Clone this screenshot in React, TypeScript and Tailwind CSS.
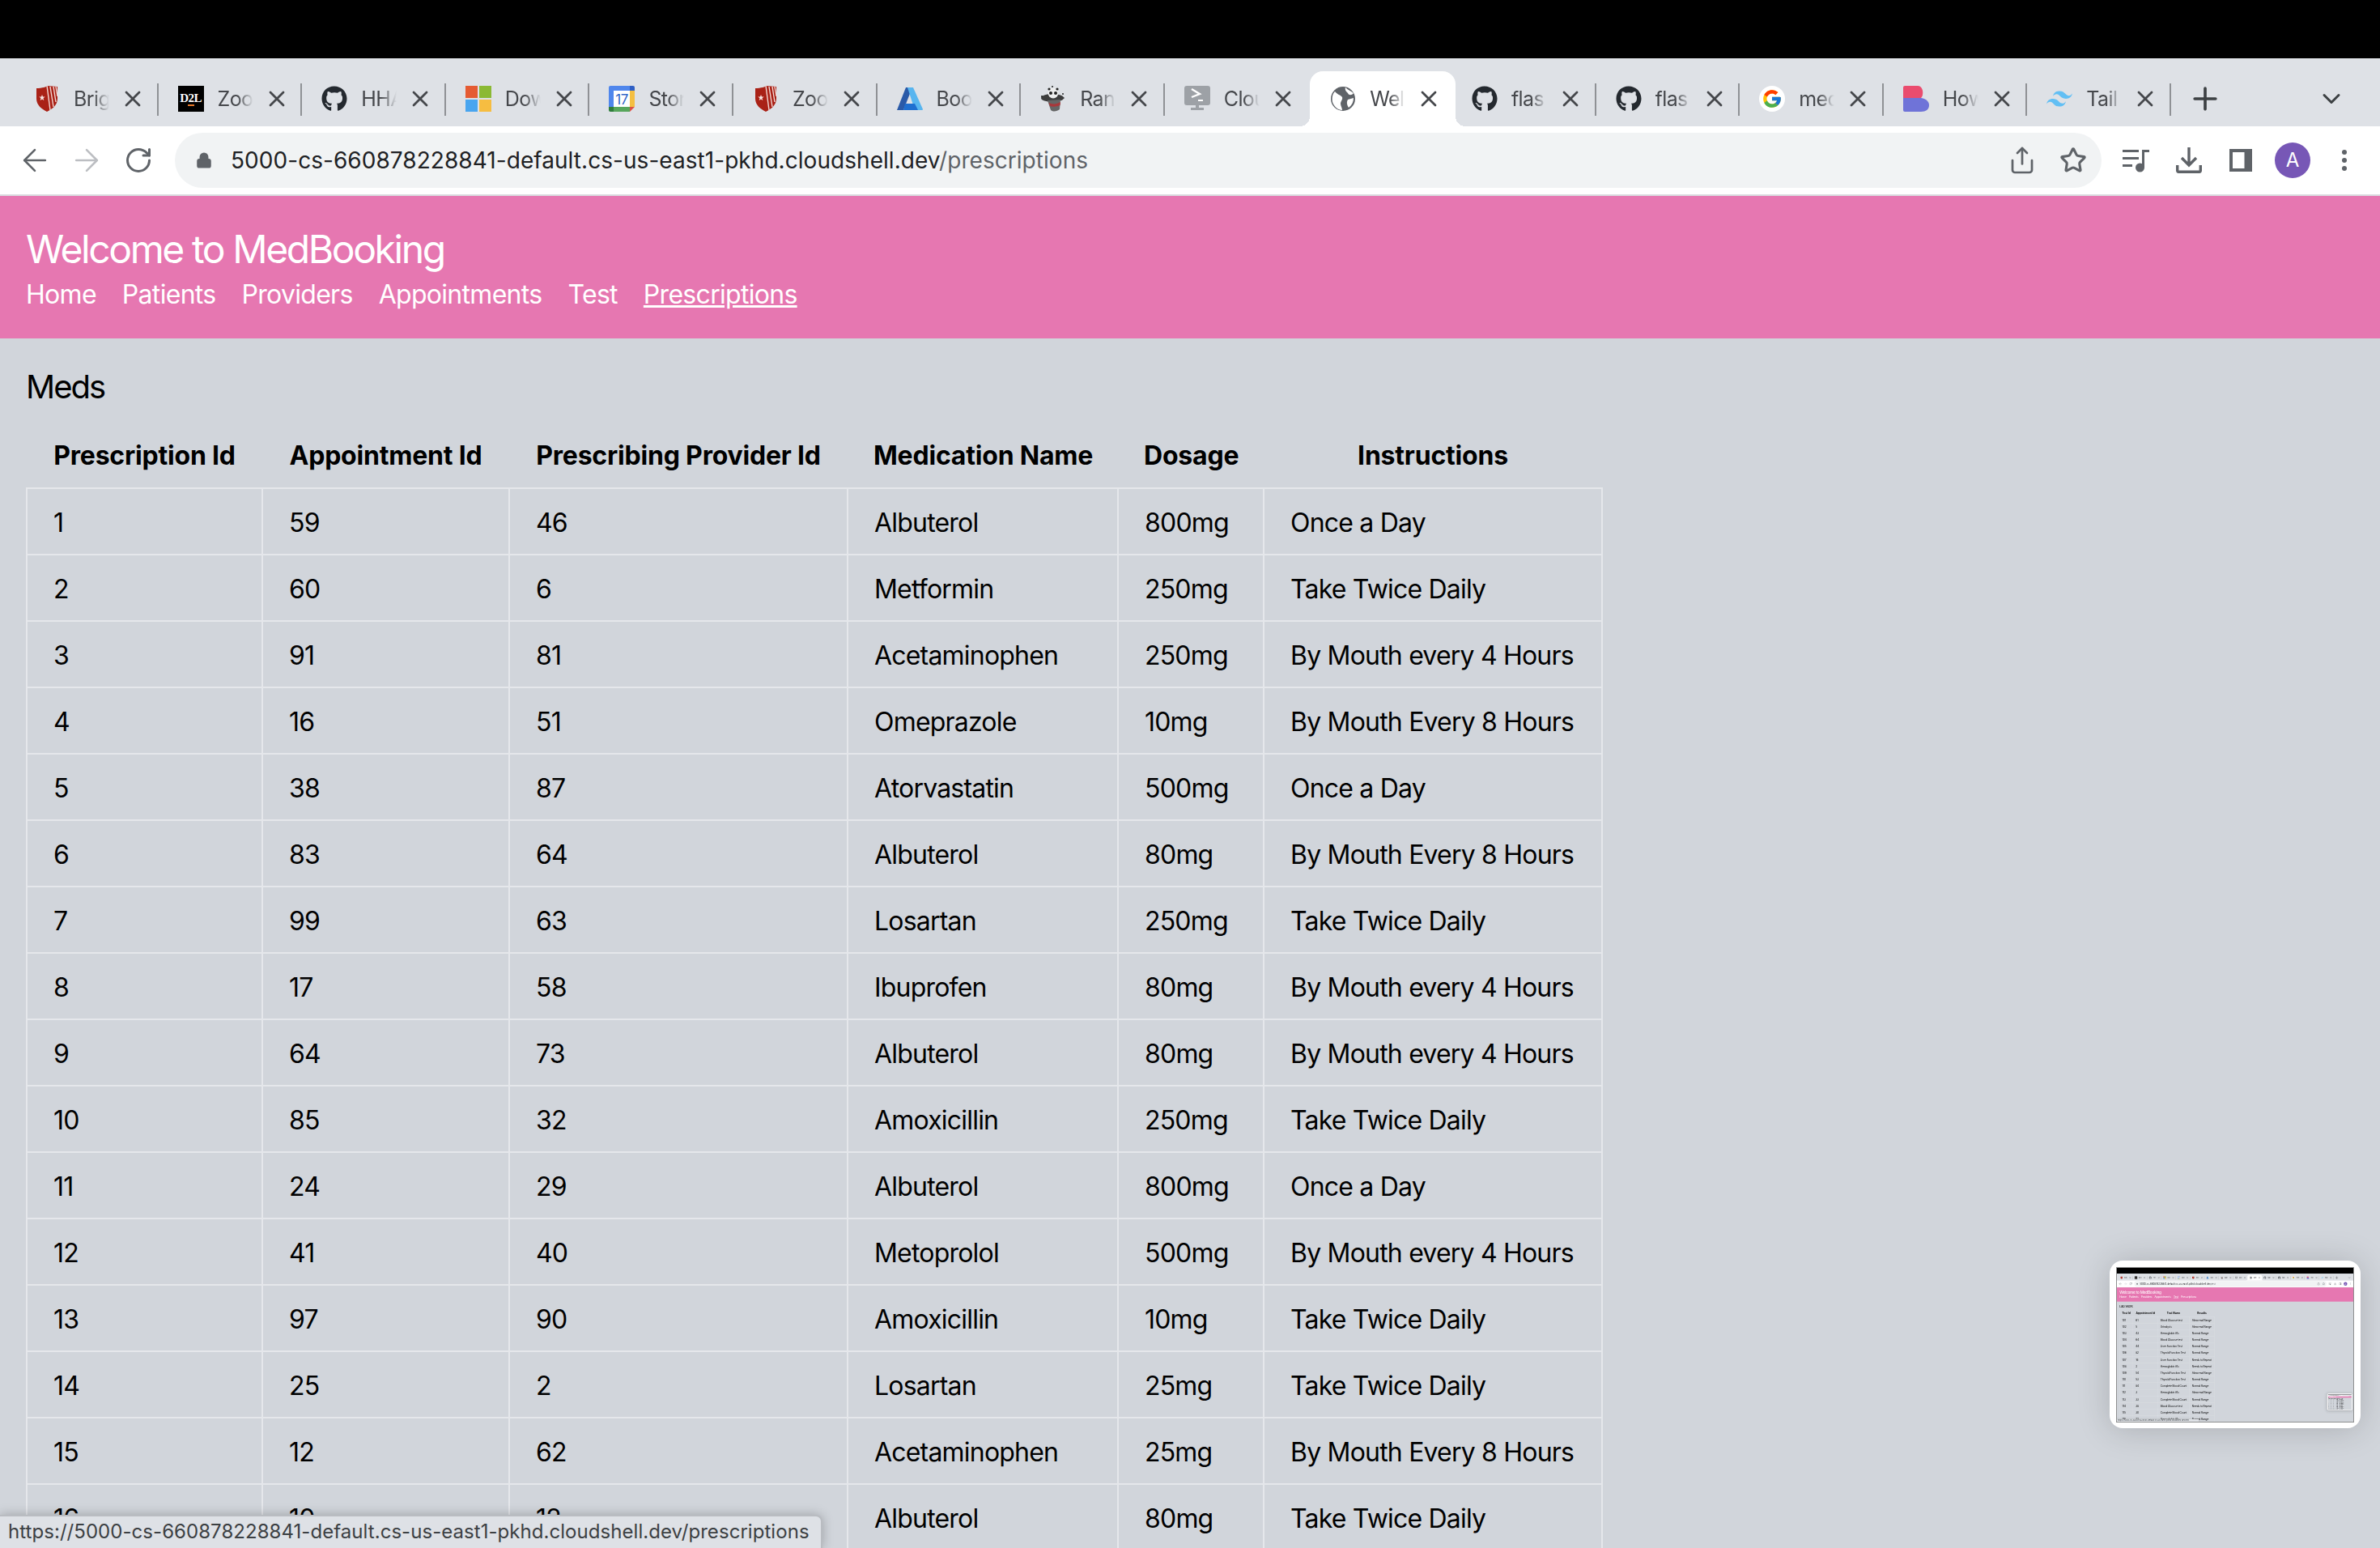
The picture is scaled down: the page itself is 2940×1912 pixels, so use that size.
import { ArrowLeft, ArrowRight, ChevronDown, Lock, Plus, RotateCw, Share, Star, X } from "lucide-react"
import { FaGithub } from "react-icons/fa"
import { FcGoogle } from "react-icons/fc"
import { SiTailwindcss } from "react-icons/si"

const Shield = () => (
  <svg viewBox="0 0 32 32" className="w-8 h-8">
    <path d="M3 3 C10 3 16 1 16 0 L29 1 V16 C29 24 22 29 16 32 C10 29 3 24 3 16 Z" fill="#a92116" />
    <path d="M16 0 L20 30 M20 1 L24 26 M24 1 L27 20 M27 1 L29 13" stroke="#f3d9d5" strokeWidth="1.4" fill="none" />
    <path d="M10 11 l1 2.6 2.7 0 -2.2 1.7 0.8 2.7 -2.3 -1.6 -2.3 1.6 0.8 -2.7 -2.2 -1.7 2.7 0 z" fill="#f7e6e3" />
  </svg>
)

const D2L = () => (
  <div className="w-8 h-8 bg-black flex flex-col items-center justify-center overflow-hidden">
    <span className="[font-family:'Liberation_Serif',serif] font-bold text-white text-[15px] leading-[15px] tracking-[-0.5px]">D2L</span>
    <span className="w-[8px] h-[2px] bg-[#e8792b]" />
  </div>
)

const Github = () => <FaGithub className="w-8 h-8 text-[#24292f]" />

const Microsoft = () => (
  <div className="w-8 h-8 grid grid-cols-2 gap-[2px]">
    <span className="bg-[#e55b33]" />
    <span className="bg-[#8bb934]" />
    <span className="bg-[#49a5ef]" />
    <span className="bg-[#f6bd41]" />
  </div>
)

const Calendar = () => (
  <svg viewBox="0 0 32 32" className="w-8 h-8">
    <path d="M2 0 H26 V6 H6 V26 H0 V2 A2 2 0 0 1 2 0 Z" fill="#4f86ec" />
    <path d="M26 0 H30 A2 2 0 0 1 32 2 V6 H26 Z" fill="#2f5fc4" />
    <rect x="26" y="6" width="6" height="20" fill="#f4bf42" />
    <rect x="6" y="26" width="20" height="6" fill="#57a65c" />
    <path d="M0 26 H6 V32 H2 A2 2 0 0 1 0 30 Z" fill="#2f7d3c" />
    <path d="M26 26 H32 L26 32 Z" fill="#dd5144" />
    <rect x="6" y="6" width="20" height="20" fill="#fff" />
    <text x="16" y="22.5" textAnchor="middle" fontSize="17" fill="#3367c8" fontFamily="Inter, sans-serif">17</text>
  </svg>
)

const Azure = () => (
  <svg viewBox="0 0 32 32" className="w-8 h-8">
    <path d="M11 2 H19 L8 30 H0 Z" fill="#2a5aa8" />
    <path d="M13 2 H20 L32 29 A1 1 0 0 1 31 30 H22 Z" fill="#58b5ef" />
    <path d="M10 22 H22 L26 30 H8 Z" fill="#1f6fd0" />
  </svg>
)

const Hat = () => (
  <svg viewBox="0 0 32 32" className="w-8 h-8">
    <ellipse cx="15" cy="15" rx="14" ry="5" fill="#3d3d3d" />
    <path d="M9 18 L13 30 C17 33 21 31 24 29 L25 17 Z" fill="#666" />
    <path d="M10.5 21 C15 23 20 23 25 20 L24.5 24 C20 26 15 26 12 25 Z" fill="#a8383b" />
    <circle cx="16" cy="9" r="6.5" fill="#eee" />
    <circle cx="13" cy="9" r="2" fill="#222" />
    <circle cx="19" cy="9" r="2" fill="#222" />
    <circle cx="11" cy="4" r="1.6" fill="#222" />
    <circle cx="21" cy="4" r="1.6" fill="#222" />
    <circle cx="15" cy="1" r="1" fill="#222" />
    <circle cx="28" cy="10" r="1" fill="#222" />
    <circle cx="2" cy="13" r="1" fill="#222" />
    <circle cx="29" cy="15" r="0.8" fill="#222" />
  </svg>
)

const CloudShell = () => (
  <svg viewBox="0 0 32 32" className="w-8 h-8">
    <rect x="0" y="0" width="32" height="24" rx="3" fill="#9da1a6" />
    <rect x="14" y="24" width="4" height="3" fill="#9da1a6" />
    <rect x="8" y="27" width="16" height="3" fill="#9da1a6" />
    <path d="M9 4 L19 10 L9 14" stroke="#fff" strokeWidth="2.4" fill="none" />
    <rect x="17" y="17" width="6" height="2" fill="#fff" />
  </svg>
)

const Globe = () => (
  <svg viewBox="0 0 32 32" className="w-8 h-8">
    <circle cx="16" cy="16" r="15" fill="#5f6368" />
    <path d="M6 7 C9 11 13 11 15 14 C16 17 13 19 13 22 C13 25 15 27 15 30 C10 30 5 26 3 20 C2 15 3 10 6 7 Z" fill="#fff" />
    <path d="M19 2 C22 5 25 6 29 9 C27 12 23 12 22 9 C20 7 18 5 19 2 Z M22 17 L29 15 C29 20 27 24 23 27 C21 24 20 20 22 17 Z" fill="#fff" />
  </svg>
)

const Google = () => (
  <div className="w-8 h-8 rounded-full bg-white flex items-center justify-center">
    <FcGoogle className="w-[26px] h-[26px]" />
  </div>
)

const Hashnode = () => (
  <svg viewBox="0 0 32 32" className="w-8 h-8">
    <path d="M2 0 H18 C23 0 25 6 24 11 C24 12 23 14 22 15 H0 V2 A2 2 0 0 1 2 0 Z" fill="#ea4c6e" />
    <path d="M0 15 H22 C29 16 32 20 32 24 C32 29 28 32 22 32 H2 A2 2 0 0 1 0 30 Z" fill="#6f73d8" />
  </svg>
)

const Tailwind = () => <SiTailwindcss className="w-8 h-8 text-[#62bff4]" />

const tabs = [
  { label: "Brig", icon: <Shield /> },
  { label: "Zoo", icon: <D2L /> },
  { label: "HHA", icon: <Github /> },
  { label: "Dow", icon: <Microsoft /> },
  { label: "Stor", icon: <Calendar /> },
  { label: "Zoo", icon: <Shield /> },
  { label: "Boo", icon: <Azure /> },
  { label: "Ran", icon: <Hat /> },
  { label: "Clou", icon: <CloudShell /> },
  { label: "Wel", icon: <Globe />, active: true },
  { label: "flas", icon: <Github /> },
  { label: "flas", icon: <Github /> },
  { label: "med", icon: <Google /> },
  { label: "How", icon: <Hashnode /> },
  { label: "Tail", icon: <Tailwind /> },
]

const meds = [
  ["1", "59", "46", "Albuterol", "800mg", "Once a Day"],
  ["2", "60", "6", "Metformin", "250mg", "Take Twice Daily"],
  ["3", "91", "81", "Acetaminophen", "250mg", "By Mouth every 4 Hours"],
  ["4", "16", "51", "Omeprazole", "10mg", "By Mouth Every 8 Hours"],
  ["5", "38", "87", "Atorvastatin", "500mg", "Once a Day"],
  ["6", "83", "64", "Albuterol", "80mg", "By Mouth Every 8 Hours"],
  ["7", "99", "63", "Losartan", "250mg", "Take Twice Daily"],
  ["8", "17", "58", "Ibuprofen", "80mg", "By Mouth every 4 Hours"],
  ["9", "64", "73", "Albuterol", "80mg", "By Mouth every 4 Hours"],
  ["10", "85", "32", "Amoxicillin", "250mg", "Take Twice Daily"],
  ["11", "24", "29", "Albuterol", "800mg", "Once a Day"],
  ["12", "41", "40", "Metoprolol", "500mg", "By Mouth every 4 Hours"],
  ["13", "97", "90", "Amoxicillin", "10mg", "Take Twice Daily"],
  ["14", "25", "2", "Losartan", "25mg", "Take Twice Daily"],
  ["15", "12", "62", "Acetaminophen", "25mg", "By Mouth Every 8 Hours"],
  ["16", "10", "12", "Albuterol", "80mg", "Take Twice Daily"],
]

const labs = [
  ["101", "61", "Blood Glucose test", "Abnormal Range"],
  ["102", "5", "Urinalysis", "Abnormal Range"],
  ["103", "43", "Hemoglobin A1c", "Normal Range"],
  ["104", "64", "Blood Glucose test", "Normal Range"],
  ["105", "44", "Liver Function Test", "Normal Range"],
  ["106", "82", "Thyroid Function Test", "Normal Range"],
  ["107", "16", "Liver Function Test", "Needs to Repeat"],
  ["108", "2", "Hemoglobin A1c", "Needs to Repeat"],
  ["109", "54", "Thyroid Function Test", "Abnormal Range"],
  ["110", "53", "Thyroid Function Test", "Normal Range"],
  ["111", "84", "Complete Blood Count", "Normal Range"],
  ["112", "3", "Hemoglobin A1c", "Abnormal Range"],
  ["113", "33", "Complete Blood Count", "Normal Range"],
  ["114", "38", "Blood Glucose test", "Needs to Repeat"],
  ["115", "30", "Complete Blood Count", "Normal Range"],
  ["116", "22", "Hemoglobin A1c", "Normal Range"],
]

const views = [
  {
    page: "prescriptions",
    nav: "Prescriptions",
    heading: "Meds",
    headers: ["Prescription Id", "Appointment Id", "Prescribing Provider Id", "Medication Name", "Dosage", "Instructions"],
    widths: [291, 305, 418, 334, 180, 418],
    rows: meds,
  },
  {
    page: "test",
    nav: "Test",
    heading: "Lab Work",
    headers: ["Test Id", "Appointment Id", "Test Name", "Results"],
    widths: [167, 307, 391, 311],
    rows: labs,
  },
]

const navLinks = ["Home", "Patients", "Providers", "Appointments", "Test", "Prescriptions"]

function TabStrip() {
  return (
    <div className="h-[84px] bg-[#dee1e6] pl-[18px] pt-4 flex items-stretch tracking-[-0.6px]">
      {tabs.map((t, i) => {
        const next = tabs[i + 1]
        const plainEdge = !t.active && !(next && next.active)
        return (
          <div
            key={i}
            className={`relative w-[177.6px] shrink-0 flex items-center ${t.active ? "pl-[27px]" : "pl-6"}`}
          >
            {t.active && (
              <span className="absolute left-[2px] -right-[4px] top-0 bottom-0 bg-white rounded-t-[16px]">
                <span className="absolute -left-3 bottom-0 w-3 h-3 bg-[radial-gradient(circle_at_0_0,transparent_12px,white_12px)]" />
                <span className="absolute -right-3 bottom-0 w-3 h-3 bg-[radial-gradient(circle_at_100%_0,transparent_12px,white_12px)]" />
              </span>
            )}
            <span className="relative">{t.icon}</span>
            <span className="relative ml-[17px] w-[44px] overflow-hidden whitespace-nowrap text-[25px] leading-8 text-[#45474b] [mask-image:linear-gradient(to_right,black_55%,transparent)]">
              {t.label}
            </span>
            <X size={32} strokeWidth={2.1} className="relative ml-[13px] text-[#45474b]" />
            {plainEdge && <span className="absolute right-0 top-[15px] w-[2px] h-10 bg-[#8f9195]" />}
          </div>
        )
      })}
      <div className="w-[84px] flex items-center justify-center">
        <Plus size={44} strokeWidth={2} className="text-[#3c4043]" />
      </div>
      <div className="ml-[82px] w-[64px] flex items-center justify-center">
        <ChevronDown size={36} strokeWidth={2} className="text-[#3c4043]" />
      </div>
    </div>
  )
}

function Toolbar({ page }: { page: string }) {
  return (
    <div className="h-[86px] bg-white border-b-2 border-[#dadce0] flex items-center pl-[11px]">
      <div className="w-16 flex justify-center">
        <ArrowLeft size={44} strokeWidth={1.4} className="text-[#5f6368]" />
      </div>
      <div className="w-16 flex justify-center">
        <ArrowRight size={44} strokeWidth={1.4} className="text-[#bcbec2]" />
      </div>
      <div className="w-16 flex justify-center">
        <RotateCw size={36} strokeWidth={2} className="text-[#5f6368]" />
      </div>
      <div className="ml-[13px] w-[2380px] h-[68px] rounded-full bg-[#f1f3f4] flex items-center pl-[26px] pr-1">
        <Lock size={20} strokeWidth={3} fill="#5f6368" className="text-[#5f6368]" />
        <div className="ml-[23px] text-[28px] leading-10 text-[#202124] whitespace-nowrap tracking-[0.05px]">
          5000-cs-660878228841-default.cs-us-east1-pkhd.cloudshell.dev
          <span className="text-[#5f6368]">/{page}</span>
        </div>
        <div className="ml-auto w-[63px] flex justify-center">
          <Share size={36} strokeWidth={1.8} className="text-[#5f6368]" />
        </div>
        <div className="w-[63px] flex justify-center">
          <Star size={34} strokeWidth={2.2} className="text-[#5f6368]" />
        </div>
      </div>
      <div className="ml-3 w-16 flex justify-center">
        <svg viewBox="0 0 36 32" className="w-9 h-8" fill="#5f6368">
          <rect x="0" y="3" width="20" height="3" />
          <rect x="0" y="12" width="20" height="3" />
          <rect x="0" y="21" width="12" height="3" />
          <rect x="24" y="3" width="3" height="22" />
          <rect x="24" y="3" width="9" height="3" />
          <circle cx="21.5" cy="25" r="5.5" />
        </svg>
      </div>
      <div className="w-16 flex justify-center">
        <svg viewBox="0 0 32 32" className="w-8 h-8" fill="none" stroke="#5f6368" strokeWidth="3.4">
          <path d="M16 0 V21 M7 13 L16 22 L25 13" />
          <path d="M1.7 22 V29 A1.5 1.5 0 0 0 3 30.3 H29 A1.5 1.5 0 0 0 30.3 29 V22" />
        </svg>
      </div>
      <div className="w-16 flex justify-center">
        <svg viewBox="0 0 28 28" className="w-7 h-7">
          <rect width="28" height="28" fill="#5f6368" />
          <rect x="4" y="4" width="14.5" height="20" fill="#fff" />
        </svg>
      </div>
      <div className="w-16 flex justify-center">
        <div className="w-11 h-11 rounded-full bg-[#7757b6] text-white text-[24px] flex items-center justify-center">A</div>
      </div>
      <div className="w-16 flex flex-col items-center gap-1">
        <span className="w-[6px] h-[6px] rounded-full bg-[#5f6368]" />
        <span className="w-[6px] h-[6px] rounded-full bg-[#5f6368]" />
        <span className="w-[6px] h-[6px] rounded-full bg-[#5f6368]" />
      </div>
    </div>
  )
}

function Screen({ depth }: { depth: number }) {
  const view = views[depth % 2]
  const tableWidth = view.widths.reduce((sum, w) => sum + w, 0)

  return (
    <div className="relative w-[2940px] h-[1912px] overflow-hidden bg-[#d1d5db] [font-family:Inter,sans-serif]">
      <div className="h-[72px] bg-black" />
      <TabStrip />
      <Toolbar page={view.page} />

      <header className="bg-[#e677b1] text-white px-8 pt-[34px] pb-[30px]">
        <h1 className="text-[48px] leading-[64px] tracking-[-2.4px]">Welcome to MedBooking</h1>
        <nav className="flex gap-8 text-[32px] leading-[48px] tracking-[-0.7px]">
          {navLinks.map((link) => (
            <a key={link} className={link === view.nav ? "underline" : ""}>
              {link}
            </a>
          ))}
        </nav>
      </header>

      <main className="px-8 pt-8 text-black">
        <h2 className="text-[40px] leading-[56px] mb-4 tracking-[-2px]">{view.heading}</h2>
        <table
          className="table-fixed border-collapse text-[32px] leading-[48px] tracking-[-0.8px]"
          style={{ width: tableWidth }}
        >
          <colgroup>
            {view.widths.map((w, i) => (
              <col key={i} style={{ width: w }} />
            ))}
          </colgroup>
          <thead>
            <tr>
              {view.headers.map((h) => (
                <th key={h} className="px-8 pt-[17px] pb-[15px] font-bold text-center whitespace-nowrap tracking-[-0.2px]">
                  {h}
                </th>
              ))}
            </tr>
          </thead>
          <tbody>
            {view.rows.map((row, r) => (
              <tr key={r}>
                {row.map((cell, c) => (
                  <td key={c} className="border-2 border-[#e5e7eb] px-8 pt-[18px] pb-[14px] whitespace-nowrap">
                    {cell}
                  </td>
                ))}
              </tr>
            ))}
          </tbody>
        </table>
      </main>

      {/* hover url bubble */}
      <div className="absolute left-0 bottom-0 h-[41px] w-[1016px] bg-[#dee1e6] border-t-2 border-r-2 border-[#b9bcc1] rounded-tr-[8px] shadow-[0_0_14px_rgba(0,0,0,0.25)] pl-[10px] text-[24px] leading-[38px] text-[#3c4043] whitespace-nowrap overflow-hidden tracking-[0.05px]">
        https://5000-cs-660878228841-default.cs-us-east1-pkhd.cloudshell.dev/{view.page}
      </div>

      {/* macOS screenshot preview */}
      {depth < 2 && (
        <div className="absolute left-[2606px] top-[1557px] w-[310px] h-[207px] bg-white rounded-[16px] shadow-[0_2px_40px_rgba(0,0,0,0.18)] pl-2 pt-2">
          <div className="w-[294px] h-[192px] overflow-hidden border border-[#8f9090]">
            <div className="origin-top-left scale-[0.0997] blur-[8px]">
              <Screen depth={depth + 1} />
            </div>
          </div>
        </div>
      )}
    </div>
  )
}

export default function App() {
  return <Screen depth={0} />
}
